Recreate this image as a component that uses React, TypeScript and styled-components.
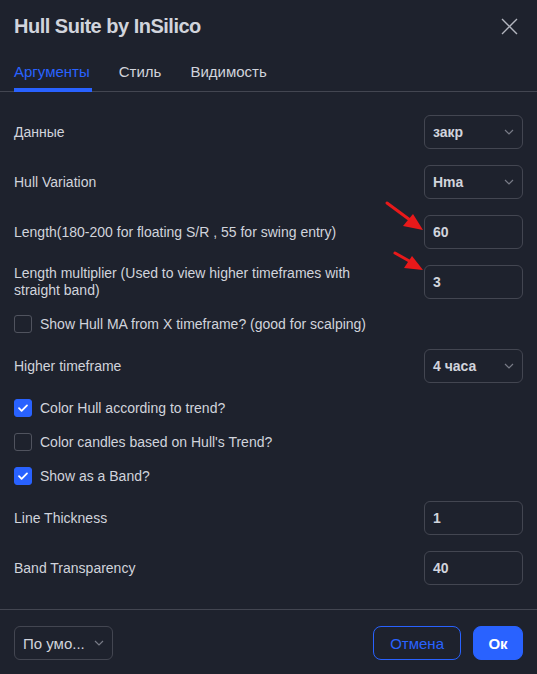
import React from "react";
import styled, { createGlobalStyle } from "styled-components";

const Global = createGlobalStyle`
  html, body { margin: 0; padding: 0; background: #1e222d; }
  * { box-sizing: border-box; }
`;

const Dialog = styled.div`
  position: relative;
  width: 537px;
  height: 674px;
  background: #1e222d;
  color: #d1d4dc;
  font-family: "Liberation Sans", Arial, sans-serif;
  display: flex;
  flex-direction: column;
  overflow: hidden;
`;

const Header = styled.div`
  flex-shrink: 0;
  height: 50px;
  padding: 2px 19px 0 14px;
  display: flex;
  align-items: center;
  justify-content: space-between;
`;

const Title = styled.div`
  font-size: 20px;
  font-weight: 700;
  letter-spacing: -0.5px;
  color: #d1d4dc;
`;

const CloseBtn = styled.button`
  background: none;
  border: none;
  padding: 0;
  width: 17px;
  height: 17px;
  display: flex;
  cursor: pointer;
`;

const Tabs = styled.div`
  flex-shrink: 0;
  height: 42px;
  display: flex;
  align-items: flex-end;
  gap: 27px;
  padding-left: 14px;
  border-bottom: 1px solid #434651;
`;

const Tab = styled.div<{ $active?: boolean }>`
  font-size: 15px;
  padding: 0 2px 8px 0;
  margin-bottom: -1px;
  color: ${(p) => (p.$active ? "#2962ff" : "#d1d4dc")};
  border-bottom: 4px solid ${(p) => (p.$active ? "#2962ff" : "transparent")};
`;

const Content = styled.div`
  flex-shrink: 0;
  padding: 23px 14px 24px;
  display: flex;
  flex-direction: column;
  gap: 16px;
  border-bottom: 1px solid #434651;
`;

const Row = styled.div`
  display: flex;
  align-items: center;
  justify-content: space-between;
  min-height: 34px;
`;

const Label = styled.div`
  font-size: 14px;
  line-height: 17px;
  color: #d1d4dc;
  max-width: 370px;
`;

const Field = styled.div`
  width: 99px;
  height: 34px;
  border: 1px solid #434651;
  border-radius: 6px;
  padding: 0 8px 0 8px;
  display: flex;
  align-items: center;
  justify-content: space-between;
  font-size: 14px;
  font-weight: 700;
  color: #d1d4dc;
`;

const CheckRow = styled.label`
  display: flex;
  align-items: center;
  gap: 8px;
  height: 18px;
  font-size: 14px;
  color: #d1d4dc;
`;

const Box = styled.span<{ $checked?: boolean }>`
  width: 18px;
  height: 18px;
  border-radius: 3px;
  display: flex;
  align-items: center;
  justify-content: center;
  background: ${(p) => (p.$checked ? "#2962ff" : "transparent")};
  border: 1px solid ${(p) => (p.$checked ? "#2962ff" : "#50535e")};
`;

const Footer = styled.div`
  flex: 1 1 0;
  min-height: 0;
  padding: 16px 14px 0;
  display: flex;
  align-items: flex-start;
  justify-content: space-between;
`;

const Buttons = styled.div`
  display: flex;
  gap: 12px;
`;

const Button = styled.button<{ $primary?: boolean }>`
  height: 34px;
  padding: 0 ${(p) => (p.$primary ? "14px" : "16px")};
  min-width: ${(p) => (p.$primary ? "50px" : "87px")};
  border-radius: 8px;
  font-family: "Liberation Sans", Arial, sans-serif;
  font-size: 15px;
  font-weight: ${(p) => (p.$primary ? 700 : 400)};
  color: ${(p) => (p.$primary ? "#ffffff" : "#2962ff")};
  background: ${(p) => (p.$primary ? "#2962ff" : "transparent")};
  border: 1px solid #2962ff;
  cursor: pointer;
`;

const FooterSelect = styled(Field)`
  font-weight: 400;
  font-size: 15px;
`;

const Arrows = styled.svg`
  position: absolute;
  left: 0;
  top: 0;
  pointer-events: none;
`;

const Chevron = () => (
  <svg width="10" height="6" viewBox="0 0 10 6">
    <path d="M1 1l4 4 4-4" fill="none" stroke="#787b86" strokeWidth="1.2" />
  </svg>
);

const Check = () => (
  <svg width="12" height="10" viewBox="0 0 12 10">
    <path d="M2 5.2l2.6 2.6L10 2.4" fill="none" stroke="#fff" strokeWidth="1.8" strokeLinecap="round" strokeLinejoin="round" />
  </svg>
);

const Select = ({ value }: { value: string }) => (
  <Field>
    <span>{value}</span>
    <Chevron />
  </Field>
);

const Input = ({ value }: { value: string }) => (
  <Field>
    <span>{value}</span>
  </Field>
);

const Checkbox = ({ checked, label }: { checked?: boolean; label: string }) => (
  <CheckRow>
    <Box $checked={checked}>{checked && <Check />}</Box>
    <span>{label}</span>
  </CheckRow>
);

export default function App() {
  return (
    <>
      <Global />
      <Dialog>
        <Header>
          <Title>Hull Suite by InSilico</Title>
          <CloseBtn aria-label="close">
            <svg width="17" height="17" viewBox="0 0 17 17">
              <path d="M1 1l15 15M16 1L1 16" stroke="#b2b5be" strokeWidth="1.4" />
            </svg>
          </CloseBtn>
        </Header>
        <Tabs>
          <Tab $active>Аргументы</Tab>
          <Tab>Стиль</Tab>
          <Tab>Видимость</Tab>
        </Tabs>
        <Content>
          <Row>
            <Label>Данные</Label>
            <Select value="закр" />
          </Row>
          <Row>
            <Label>Hull Variation</Label>
            <Select value="Hma" />
          </Row>
          <Row>
            <Label>Length(180-200 for floating S/R , 55 for swing entry)</Label>
            <Input value="60" />
          </Row>
          <Row>
            <Label>Length multiplier (Used to view higher timeframes with straight band)</Label>
            <Input value="3" />
          </Row>
          <Checkbox label="Show Hull MA from X timeframe? (good for scalping)" />
          <Row>
            <Label>Higher timeframe</Label>
            <Select value="4 часа" />
          </Row>
          <Checkbox checked label="Color Hull according to trend?" />
          <Checkbox label="Color candles based on Hull's Trend?" />
          <Checkbox checked label="Show as a Band?" />
          <Row>
            <Label>Line Thickness</Label>
            <Input value="1" />
          </Row>
          <Row>
            <Label>Band Transparency</Label>
            <Input value="40" />
          </Row>
        </Content>
        <Footer>
          <FooterSelect>
            <span>По умо...</span>
            <Chevron />
          </FooterSelect>
          <Buttons>
            <Button>Отмена</Button>
            <Button $primary>Ок</Button>
          </Buttons>
        </Footer>
        <Arrows width="537" height="674" viewBox="0 0 537 674">
          <path d="M387 203L410 220" stroke="#e8191a" strokeWidth="3" strokeLinecap="round" />
          <polygon points="423,230 403,226 413,214" fill="#e8191a" />
          <path d="M395 253L411 262" stroke="#e8191a" strokeWidth="3" strokeLinecap="round" />
          <polygon points="423,270 404,268 412,256" fill="#e8191a" />
        </Arrows>
      </Dialog>
    </>
  );
}
